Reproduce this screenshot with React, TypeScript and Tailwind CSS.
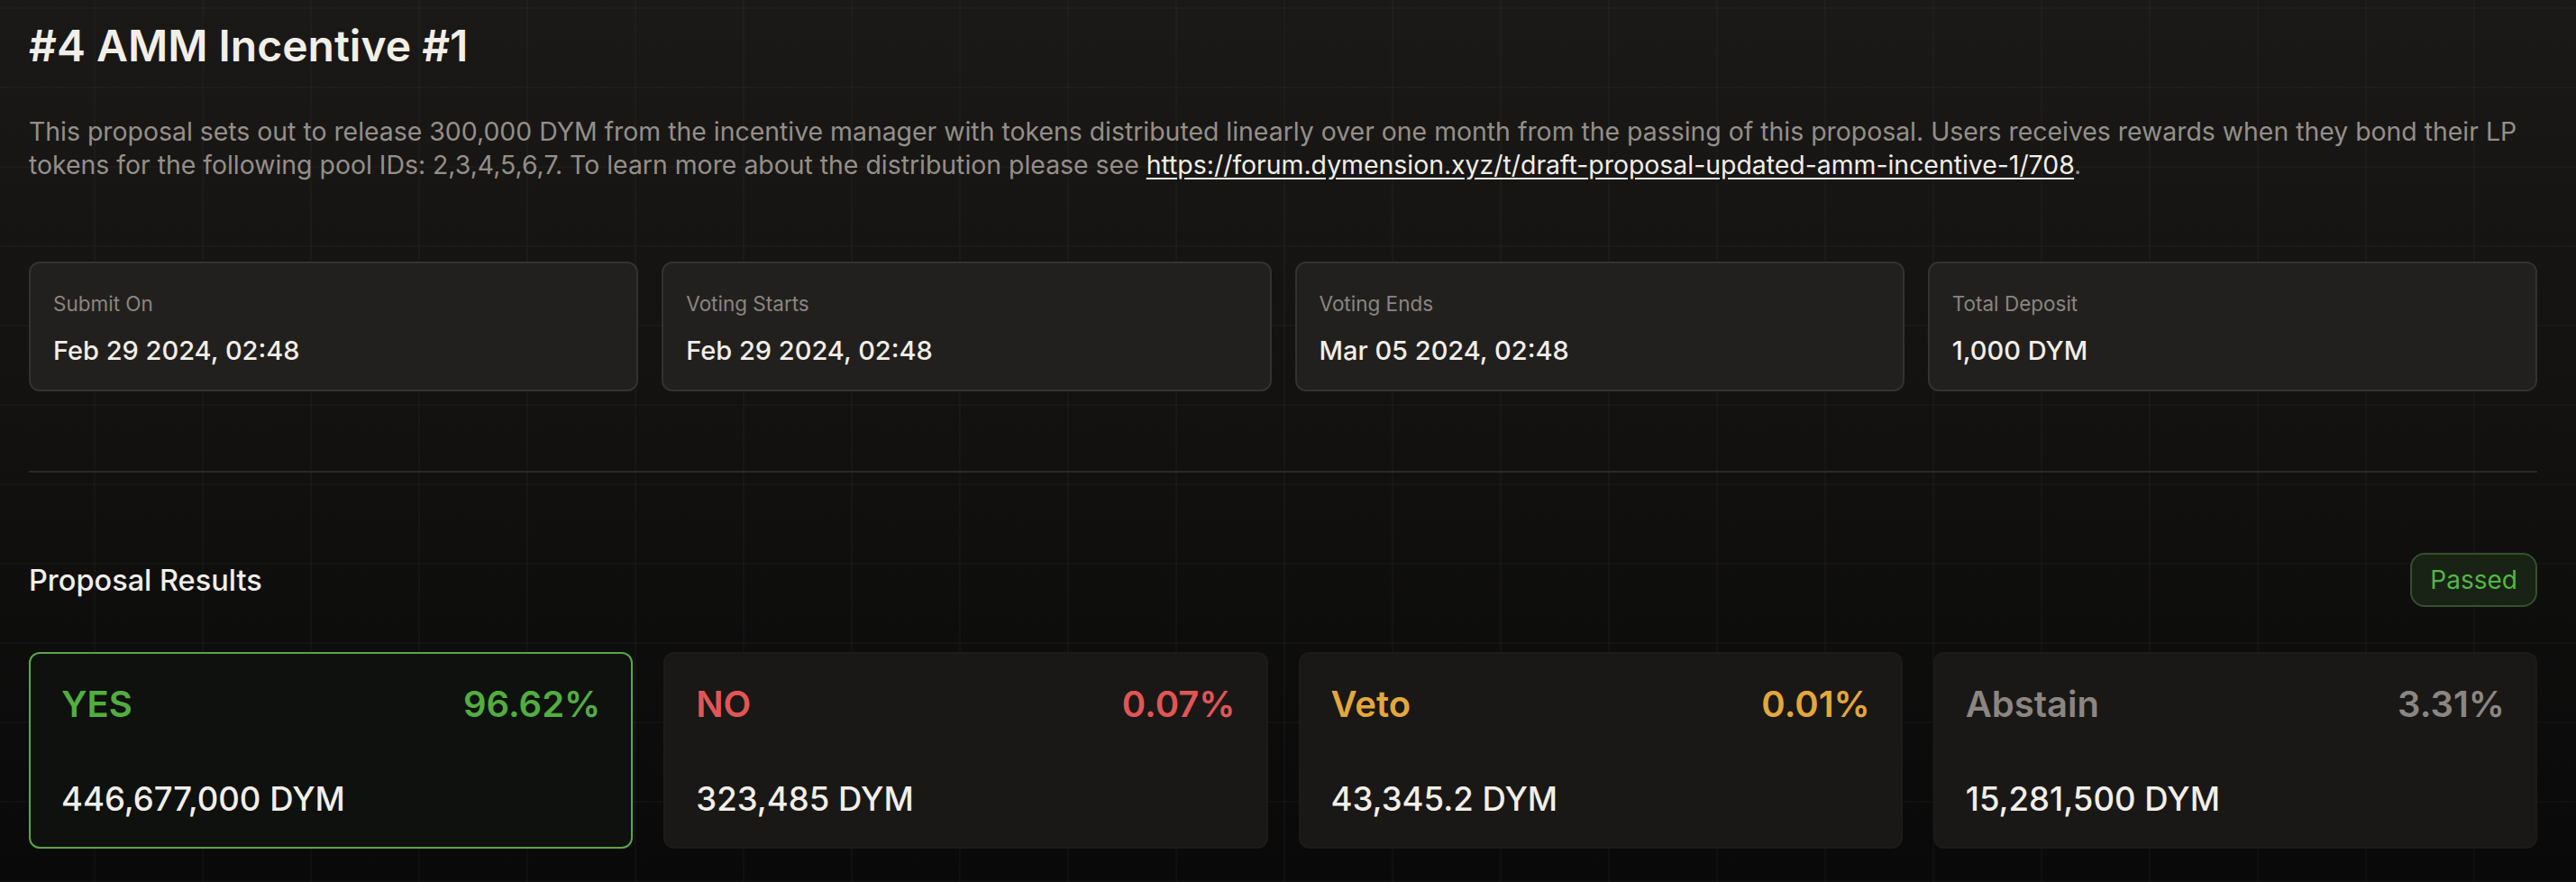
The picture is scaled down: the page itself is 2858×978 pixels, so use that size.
import React from 'react'

const infoCards = [
    { label: 'Submit On', value: 'Feb 29 2024, 02:48' },
    { label: 'Voting Starts', value: 'Feb 29 2024, 02:48' },
    { label: 'Voting Ends', value: 'Mar 05 2024, 02:48' },
    { label: 'Total Deposit', value: '1,000 DYM' },
]

const results = [
    { label: 'YES', percent: '96.62%', amount: '446,677,000 DYM', color: 'text-[#52ad40]', active: true },
    { label: 'NO', percent: '0.07%', amount: '323,485 DYM', color: 'text-[#e05656]', active: false },
    { label: 'Veto', percent: '0.01%', amount: '43,345.2 DYM', color: 'text-[#e3a73c]', active: false },
    { label: 'Abstain', percent: '3.31%', amount: '15,281,500 DYM', color: 'text-[#8b8682]', active: false },
]

function InfoCard({ label, value }: { label: string; value: string }) {
    return (
        <div className="h-[144px] rounded-[12px] border-2 border-[#34312e] bg-[#22201e] px-[25px] pt-[30px]">
            <p className="text-[22.5px] leading-[29px] text-[#8a8581]">{label}</p>
            <p className="mt-[16px] text-[29px] leading-[44px] font-medium text-[#f2eee8]">{value}</p>
        </div>
    )
}

function ResultCard({ label, percent, amount, color, active }: typeof results[number]) {
    return (
        <div
            className={
                active
                    ? 'h-[218px] rounded-[12px] border-2 border-[#5aa646] bg-[#0e110d] px-[34px] pt-[28px]'
                    : 'h-[218px] rounded-[12px] border-2 border-[#1d1b19] bg-[#1a1816] px-[34px] pt-[28px]'
            }
        >
            <div className={`flex items-center justify-between text-[40px] leading-[56px] font-semibold ${color}`}>
                <span>{label}</span>
                <span>{percent}</span>
            </div>
            <p className="mt-[55px] text-[36.5px] leading-[44px] font-medium text-[#f2eee8]">{amount}</p>
        </div>
    )
}

export default function App() {
    return (
        <div className="min-h-screen w-full bg-[image:linear-gradient(to_right,rgba(255,255,255,0.025)_2px,transparent_2px),linear-gradient(to_bottom,rgba(255,255,255,0.02)_2px,transparent_2px),linear-gradient(to_bottom,#1b1917,#090909)] bg-[size:120px_88px,120px_88px,100%_100%] bg-[position:104px_8px,104px_8px,0_0] pl-[32px] pr-[43px] pt-[21px] font-['Inter',sans-serif]">
            <h1 className="text-[48px] leading-[60px] font-semibold text-[#f2eee8]">#4 AMM Incentive #1</h1>

            <p className="mt-[46px] text-[28.4px] leading-[37px] text-[#948f8a]">
                This proposal sets out to release 300,000 DYM from the incentive manager with tokens distributed linearly over one month from the passing of this proposal. Users receives rewards when they bond their LP tokens for the following pool IDs: 2,3,4,5,6,7. To learn more about the distribution please see{' '}
                <a href="#" className="text-[#f2eee8] underline underline-offset-[4px]">
                    https://forum.dymension.xyz/t/draft-proposal-updated-amm-incentive-1/708
                </a>
                .
            </p>

            <div className="mt-[89px] grid grid-cols-4 gap-[26px]">
                {infoCards.map((c) => (
                    <InfoCard key={c.label} {...c} />
                ))}
            </div>

            <div className="mt-[88px] h-[2px] bg-[#2a2826]" />

            <div className="mt-[89px] flex items-center justify-between">
                <h2 className="text-[32.5px] leading-[51px] font-medium text-[#f2eee8]">Proposal Results</h2>
                <span className="flex h-[60px] items-center rounded-[16px] border-2 border-[#35502c] bg-[#182315] px-[20px] text-[28px] text-[#55b544]">
                    Passed
                </span>
            </div>

            <div className="mt-[50px] grid grid-cols-4 gap-[34px]">
                {results.map((r) => (
                    <ResultCard key={r.label} {...r} />
                ))}
            </div>
        </div>
    )
}
